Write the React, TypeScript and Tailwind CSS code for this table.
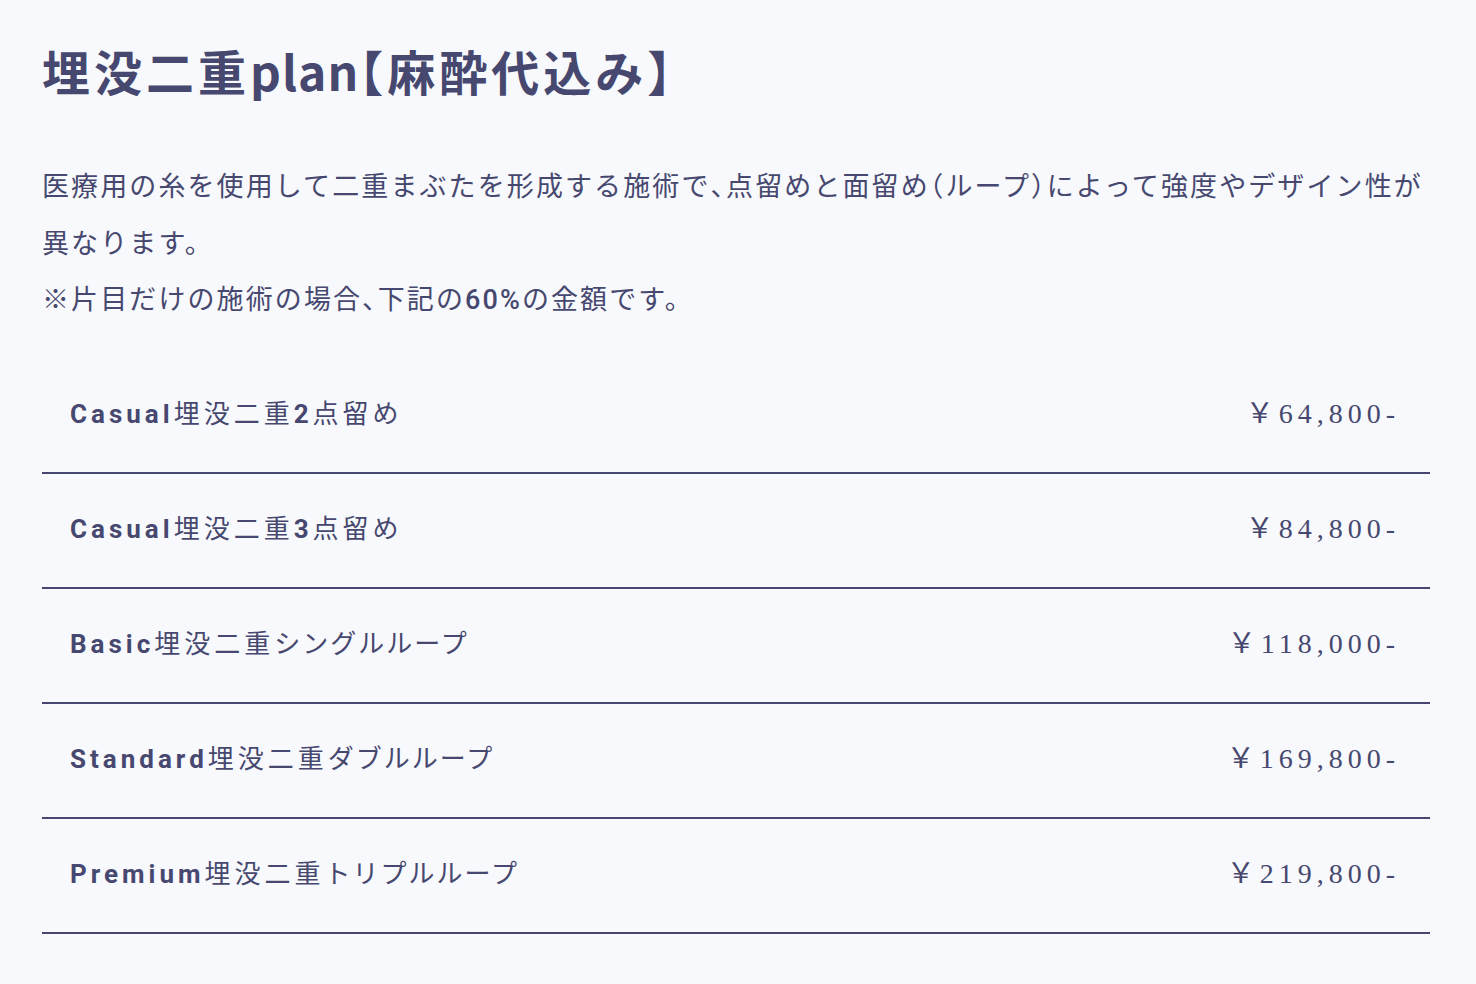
const plans = [
  { grade: "Casual", kanji: "埋没二重", num: "2", kana: "点留め", price: "￥64,800-" },
  { grade: "Casual", kanji: "埋没二重", num: "3", kana: "点留め", price: "￥84,800-" },
  { grade: "Basic", kanji: "埋没二重", num: "", kana: "シングルループ", price: "￥118,000-" },
  { grade: "Standard", kanji: "埋没二重", num: "", kana: "ダブルループ", price: "￥169,800-" },
  { grade: "Premium", kanji: "埋没二重", num: "", kana: "トリプルループ", price: "￥219,800-" },
];

// half-width punctuation like the original's proportional font
const Half = ({ children }: { children: string }) => (
  <span className="[font-feature-settings:'halt']">{children}</span>
);

function PlanRow({ grade, kanji, num, kana, price }: (typeof plans)[number]) {
  return (
    <div className="flex h-[115px] items-center justify-between border-b-2 border-[#47486f] pb-[2px] pl-[28px] pr-[30px]">
      <div className="text-[26px] tracking-[4px] font-['Roboto','Noto_Sans_CJK_JP',sans-serif]">
        <span className="font-bold">{grade}</span>
        {kanji}
        {num ? (
          <>
            <span className="font-bold">{num}</span>
            {kana}
          </>
        ) : (
          <span className="tracking-[2px]">{kana}</span>
        )}
      </div>
      <div className="text-[28px] tracking-[5px] font-['Liberation_Serif','Noto_Sans_CJK_JP',serif]">
        {price}
      </div>
    </div>
  );
}

export default function App() {
  return (
    <div className="min-h-screen bg-[#f7f9fc] text-[#47486f]">
      <div className="pl-[42px] pr-[46px] pt-[34px]">
        <h1 className="text-[48px] leading-[72px] font-bold tracking-[4px] font-['Noto_Sans_CJK_JP',sans-serif]">
          埋没二重<span className="tracking-[1px]">plan</span>
          <Half>【</Half>麻酔代込み<Half>】</Half>
        </h1>

        <p className="mt-[51px] text-[27px] leading-[56.5px] tracking-[2.1px] font-['Noto_Sans_CJK_JP',sans-serif] whitespace-nowrap">
          医療用の糸を使用して二重まぶたを形成する施術で<Half>、</Half>点留めと面留め<Half>（</Half>ループ<Half>）</Half>によって強度やデザイン性が
          <br />
          異なります。
          <br />
          ※片目だけの施術の場合<Half>、</Half>下記の
          <span className="font-['Roboto',sans-serif] font-medium">60%</span>
          の金額です。
        </p>

        <div className="mt-[30px]">
          {plans.map((p, i) => (
            <PlanRow key={i} {...p} />
          ))}
        </div>
      </div>
    </div>
  );
}
